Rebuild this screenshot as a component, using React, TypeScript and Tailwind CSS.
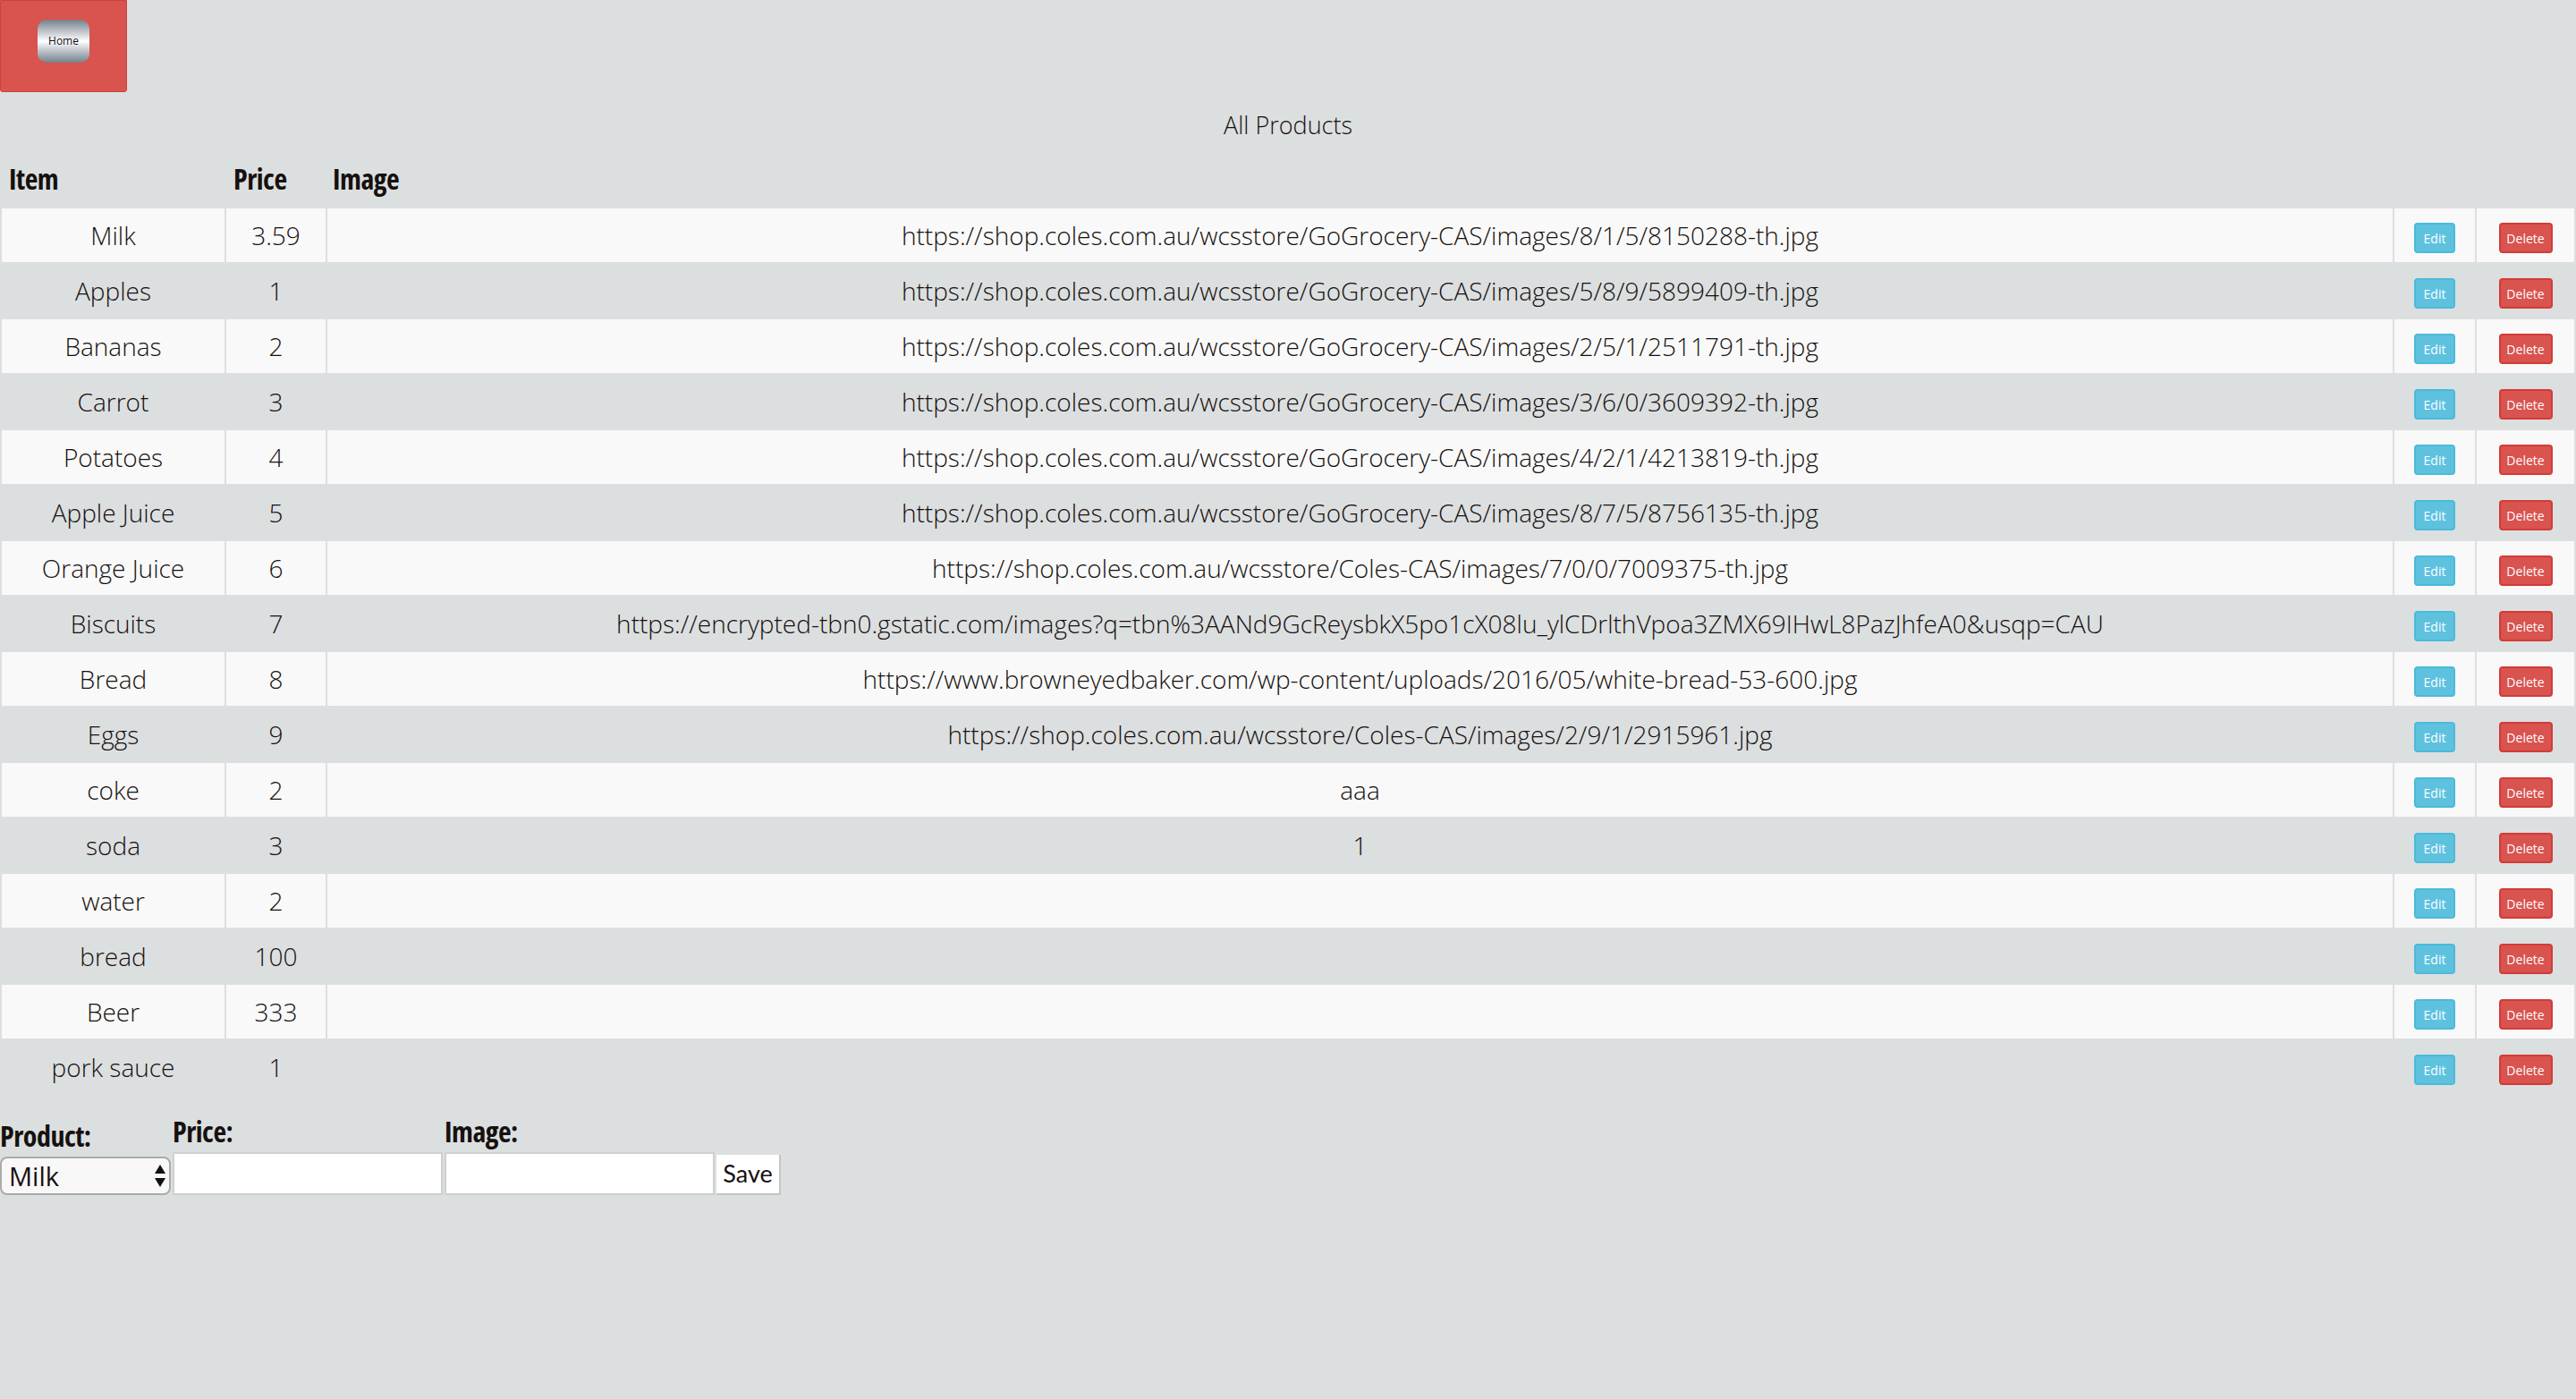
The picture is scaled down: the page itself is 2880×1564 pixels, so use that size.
import React from 'react';

const products = [
  { name: 'Milk', price: '3.59', image: 'https://shop.coles.com.au/wcsstore/GoGrocery-CAS/images/8/1/5/8150288-th.jpg' },
  { name: 'Apples', price: '1', image: 'https://shop.coles.com.au/wcsstore/GoGrocery-CAS/images/5/8/9/5899409-th.jpg' },
  { name: 'Bananas', price: '2', image: 'https://shop.coles.com.au/wcsstore/GoGrocery-CAS/images/2/5/1/2511791-th.jpg' },
  { name: 'Carrot', price: '3', image: 'https://shop.coles.com.au/wcsstore/GoGrocery-CAS/images/3/6/0/3609392-th.jpg' },
  { name: 'Potatoes', price: '4', image: 'https://shop.coles.com.au/wcsstore/GoGrocery-CAS/images/4/2/1/4213819-th.jpg' },
  { name: 'Apple Juice', price: '5', image: 'https://shop.coles.com.au/wcsstore/GoGrocery-CAS/images/8/7/5/8756135-th.jpg' },
  { name: 'Orange Juice', price: '6', image: 'https://shop.coles.com.au/wcsstore/Coles-CAS/images/7/0/0/7009375-th.jpg' },
  {
    name: 'Biscuits',
    price: '7',
    image: 'https://encrypted-tbn0.gstatic.com/images?q=tbn%3AANd9GcReysbkX5po1cX08lu_ylCDrlthVpoa3ZMX69IHwL8PazJhfeA0&usqp=CAU',
  },
  { name: 'Bread', price: '8', image: 'https://www.browneyedbaker.com/wp-content/uploads/2016/05/white-bread-53-600.jpg' },
  { name: 'Eggs', price: '9', image: 'https://shop.coles.com.au/wcsstore/Coles-CAS/images/2/9/1/2915961.jpg' },
  { name: 'coke', price: '2', image: 'aaa' },
  { name: 'soda', price: '3', image: '1' },
  { name: 'water', price: '2', image: '' },
  { name: 'bread', price: '100', image: '' },
  { name: 'Beer', price: '333', image: '' },
  { name: 'pork sauce', price: '1', image: '' },
];

// bold headings: condensed face
const heading = "font-['Open_Sans',sans-serif] font-bold font-stretch-condensed tracking-[-0.5px]";

const App = () => {
  return (
    <div className="min-h-screen bg-[#dcdfe0] text-[#16110f] font-['Open_Sans',sans-serif] font-light">
      {/* NAV */}
      <div className="w-[142px] h-[103px] bg-[#d9534f] border border-[#d43f3a] rounded-b-[3px] pl-[41px] pt-[21px]">
        <button className="w-[58px] h-[48px] rounded-[10px] bg-linear-to-b from-[#76818d] via-white to-[#76818d] text-[12px] font-normal text-[#111]">
          Home
        </button>
      </div>

      {/* TITLE */}
      <h1 className="mt-[21px] text-center text-[27px] leading-[31px]">All Products</h1>

      {/* TABLE */}
      <table className="mt-[16px] w-full table-fixed border-collapse text-[28px]">
        <colgroup>
          <col className="w-[251px]" />
          <col className="w-[113px]" />
          <col />
          <col className="w-[92px]" />
          <col className="w-[111px]" />
        </colgroup>
        <thead>
          <tr className={`${heading} text-[32px] text-left`}>
            <th className="h-[60px] border-2 border-[#dcdfe0] pl-[8px] pb-[4px]">Item</th>
            <th className="border-2 border-[#dcdfe0] pl-[8px] pb-[4px]">Price</th>
            <th className="border-2 border-[#dcdfe0] pl-[6px] pb-[4px]">Image</th>
            <th className="border-2 border-[#dcdfe0]"></th>
            <th className="border-2 border-[#dcdfe0]"></th>
          </tr>
        </thead>
        <tbody>
          {products.map((p, i) => (
            <tr key={i} className="odd:bg-[#f9f9f9] text-center">
              <td className="h-[62px] border-2 border-[#dcdfe0] p-0 whitespace-nowrap">{p.name}</td>
              <td className="border-2 border-[#dcdfe0] p-0">{p.price}</td>
              <td className="border-2 border-[#dcdfe0] p-0 whitespace-nowrap">{p.image}</td>
              <td className="border-2 border-[#dcdfe0] p-0 pt-[6px]">
                <div className="flex justify-center">
                  <button className="w-[46px] h-[34px] rounded-[4px] border-2 border-[#4bbada] bg-[#5ec2df] text-[14px] font-normal text-white">
                    Edit
                  </button>
                </div>
              </td>
              <td className="border-2 border-[#dcdfe0] p-0 pt-[6px]">
                <div className="flex justify-center">
                  <button className="w-[60px] h-[34px] rounded-[4px] border-2 border-[#d23c38] bg-[#d9534f] text-[14px] font-normal text-white">
                    Delete
                  </button>
                </div>
              </td>
            </tr>
          ))}
        </tbody>
      </table>

      {/* FORM */}
      <div className="mt-[23px] flex items-end gap-[2px]">
        <div className="flex flex-col">
          <label className={`${heading} text-[32px] leading-[34px] mb-[6px]`}>Product:</label>
          <div className="relative w-[191px] h-[43px]">
            <select className="w-full h-full appearance-none rounded-[8px] border-2 border-[#ababab] bg-[#f8f8f8] pl-[8px] text-[29px] font-normal leading-none">
              {products.map((p, i) => (
                <option key={i}>{p.name}</option>
              ))}
            </select>
            <svg className="absolute right-[5px] top-[8px] pointer-events-none" width="14" height="27" viewBox="0 0 14 27">
              <path d="M7 1 L13 11 H1 Z" fill="#111" />
              <path d="M7 26 L13 16 H1 Z" fill="#111" />
            </svg>
          </div>
        </div>
        <div className="flex flex-col">
          <label className={`${heading} text-[32px] leading-[34px] mb-[6px]`}>Price:</label>
          <input className="w-[302px] h-[48px] bg-white border-2 border-[#cfcfcf]" />
        </div>
        <div className="flex flex-col">
          <label className={`${heading} text-[32px] leading-[34px] mb-[6px]`}>Image:</label>
          <input className="w-[302px] h-[48px] bg-white border-2 border-[#cfcfcf]" />
        </div>
        <button className="w-[72px] h-[45px] bg-white border-r-2 border-b-2 border-[#c4c4c4] text-[27px] font-normal font-['Lato',sans-serif]">
          Save
        </button>
      </div>
    </div>
  );
};

export default App;
